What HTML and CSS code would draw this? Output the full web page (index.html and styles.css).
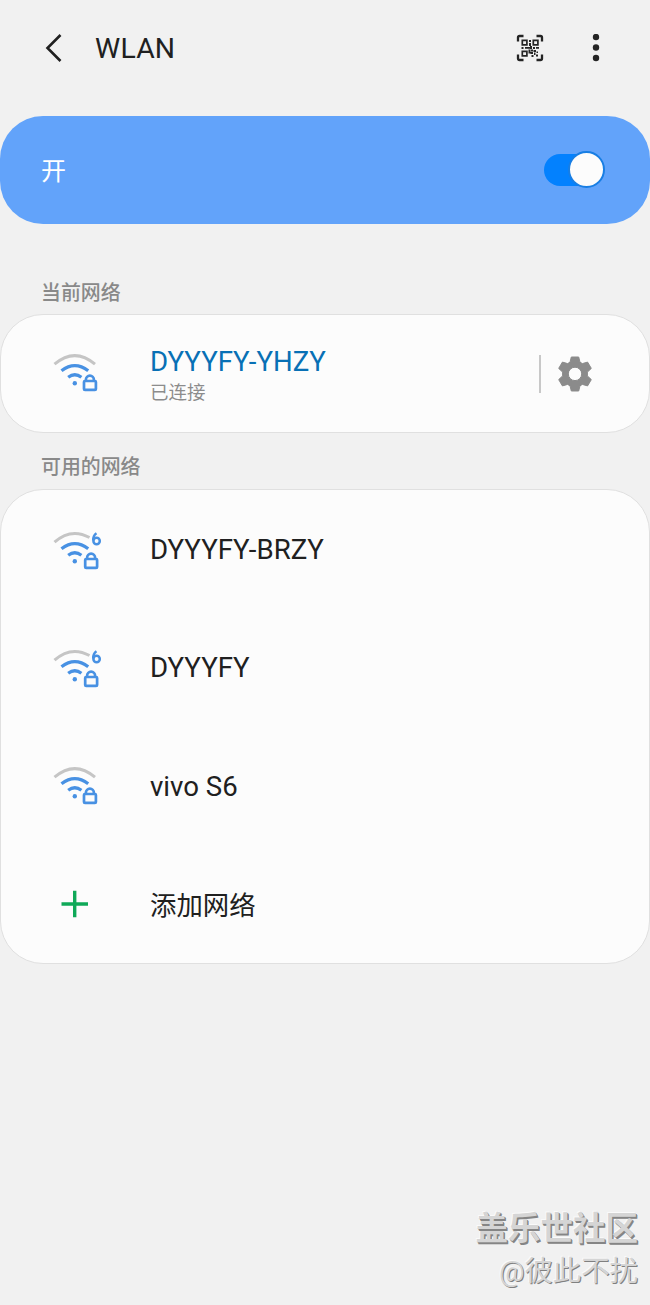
FILE: index.html
```html
<!DOCTYPE html>
<html lang="zh-CN">
<head>
<meta charset="utf-8">
<title>WLAN</title>
<link rel="stylesheet" href="styles.css">
</head>
<body>
<svg class="defs" aria-hidden="true">
  <defs>
    <g id="waves" fill="none" stroke="#4891e3" stroke-width="3.3">
      <path d="M11.500 20.700Q24.800 10.500 38.200 20.700"/>
      <path d="M18.200 27.200Q24.800 22.200 31.400 27.200"/>
      <circle cx="24.800" cy="33.300" r="2.200" fill="#4891e3" stroke="none"/>
    </g>
    <g id="lock" fill="none" stroke="#4891e3" stroke-width="2.700">
      <rect x="34" y="31" width="11.900" height="8.900" rx="1"/>
      <path d="M35.900 31V29.800a4 4.200 0 0 1 8 0V31"/>
    </g>
  </defs>
</svg>
<div class="screen">
  <header class="bar">
    <svg class="back" width="20" height="30" viewBox="0 0 20 30"><path d="M17.500 2L4.500 15L17.500 28"/></svg>
    <h1 class="title">WLAN</h1>
    <svg class="qr" width="28" height="28" viewBox="0 0 28 28">
      <path class="corner" d="M2 7.500V3.500Q2 2 3.500 2H7.500M20.500 2H24.500Q26 2 26 3.500V7.500M26 20.500V24.500Q26 26 24.500 26H20.500M7.500 26H3.500Q2 26 2 24.500V20.500"/>
      <path class="finder" d="M6.300 6.300h4.600v4.600h-4.600zM17.300 6.300h4.600v4.600h-4.600zM6.300 17.300h4.600v4.600h-4.600z"/>
      <path class="bits" d="M13 6h2v2h-2zM13 9h2v3h-2zM5.500 13h2v2h-2zM9 13h5v1.800h-5zM14 12h2v3h-2zM17 13h2v2h-2zM20 13h3v1.800h-3zM12.500 15.500h2v4h-2zM15 15.500h2v2h-2zM17.500 16h2.500v2h-2.500zM14.500 18h2.500v2h-2.500zM18 18.500h1.500v2.500h-1.500zM20.500 17.500h1.500v1.500h-1.500zM15.500 21h2v2h-2zM20 20.500h2v2h-2z"/>
    </svg>
    <svg class="more" width="8" height="28" viewBox="0 0 8 28"><circle cx="4" cy="3" r="3.200"/><circle cx="4" cy="13.500" r="3.200"/><circle cx="4" cy="24" r="3.200"/></svg>
  </header>

  <section class="power">
    <span class="power-label">开</span>
    <span class="switch"><span class="knob"></span></span>
  </section>

  <h2 class="heading current-heading">当前网络</h2>
  <section class="card current">
    <div class="row">
      <svg class="icon" width="60" height="50" viewBox="0 0 60 50"><path class="weak" d="M4.500 14.200Q24.800-3 45 14.200"/><use href="#waves"/><use href="#lock"/></svg>
      <div class="label"><span class="name connected">DYYYFY-YHZY</span><span class="status">已连接</span></div>
      <span class="divider"></span>
      <svg class="gear" width="36" height="36" viewBox="0 0 36 36"><path fill-rule="evenodd" stroke-width="1" stroke-linejoin="round" d="M14.300 1h7.400l1.300 5.200 2.400 1.400 5.200-1.500 3.700 6.300-3.900 3.700v3.800l3.900 3.700-3.700 6.300-5.200-1.500-2.400 1.400-1.300 5.200h-7.400l-1.300-5.200-2.400-1.400-5.200 1.500-3.700-6.300 3.900-3.700v-3.800l-3.900-3.700 3.700-6.300 5.200 1.500 2.400-1.400zM18 11.200a6.700 6.700 0 1 0 0 13.400a6.700 6.700 0 1 0 0-13.400z"/></svg>
    </div>
  </section>

  <h2 class="heading available-heading">可用的网络</h2>
  <section class="card">
    <div class="row">
      <svg class="icon wifi6" width="60" height="50" viewBox="0 0 60 50"><path class="weak" d="M4.500 14.200Q21-.5 39.500 9.500"/><use href="#waves"/><use href="#lock" x="1.200"/><path class="six" d="M46.500 5.200Q43 7.500 43.200 12.500"/><circle class="six" cx="46.600" cy="13" r="3.200"/></svg>
      <span class="name">DYYYFY-BRZY</span>
    </div>
    <div class="row">
      <svg class="icon wifi6" width="60" height="50" viewBox="0 0 60 50"><path class="weak" d="M4.500 14.200Q21-.5 39.500 9.500"/><use href="#waves"/><use href="#lock" x="1.200"/><path class="six" d="M46.500 5.200Q43 7.500 43.200 12.500"/><circle class="six" cx="46.600" cy="13" r="3.200"/></svg>
      <span class="name">DYYYFY</span>
    </div>
    <div class="row">
      <svg class="icon plain" width="60" height="50" viewBox="0 0 60 50"><path class="weak" d="M4.500 14.200Q24.800-3 45 14.200"/><use href="#waves"/><use href="#lock"/></svg>
      <span class="name">vivo S6</span>
    </div>
    <div class="row">
      <svg class="icon" width="60" height="50" viewBox="0 0 60 50"><path class="plus" d="M11.500 25H38M24.700 11.800V38.200"/></svg>
      <span class="name add">添加网络</span>
    </div>
  </section>

  <footer class="watermark">
    <span class="community">盖乐世社区</span>
    <span class="author">@彼此不扰</span>
  </footer>
</div>
</body>
</html>
```

FILE: styles.css
```css
* { box-sizing: border-box; }
body { margin: 0; background: #f1f1f1; color: #202020; font-family: Roboto, "Noto Sans CJK SC", sans-serif; }
.defs { display: block; width: 0; height: 0; }
.screen { width: 650px; height: 1305px; display: flex; flex-direction: column; overflow: hidden; }
svg { display: block; flex: none; }

.bar { height: 96px; display: flex; align-items: center; padding: 0 50px 0 43px; }
.back { fill: none; stroke: #202020; stroke-width: 2.6; }
.title { margin: 0 auto 0 32px; font-size: 28.4px; font-weight: 400; letter-spacing: .2px; }
.qr { margin-right: 48px; }
.corner { fill: none; stroke: #242424; stroke-width: 2.3; }
.finder { fill: none; stroke: #242424; stroke-width: 1.7; }
.bits, .more { fill: #242424; }

.power { height: 108px; margin-top: 19.5px; border-radius: 43px; background: #62a3fa; display: flex; align-items: center; justify-content: space-between; padding: 0 45px 0 41px; }
.power-label { color: #fff; font-size: 25px; line-height: 36px; padding-top: 5px; }
.switch { width: 61px; height: 32px; border-radius: 16px; background: linear-gradient(90deg, #0381fe 54px, transparent 54px); display: flex; align-items: center; justify-content: flex-end; }
.knob { width: 37px; height: 37px; flex: none; border: 2px solid #187ee4; border-radius: 50%; background: #fcfcfc; }

.heading { margin: 0; font-size: 19.9px; line-height: 30px; font-weight: 500; color: #898989; padding-left: 41px; }
.current-heading { padding-top: 55px; height: 90.5px; }
.available-heading { padding-top: 20px; height: 56px; }
.card { border: 1px solid #e0e0e0; border-radius: 43px; background: #fcfcfc; }
.row { height: 118.3px; display: flex; align-items: center; padding-left: 49px; }
.current .row { height: 117px; padding-right: 56px; }
.icon { margin-right: 40px; }
.current .icon { margin-top: 2px; }
.wifi6 { margin-top: 8px; }
.plain { margin-top: 4px; }
.weak { fill: none; stroke: #c5c5c5; stroke-width: 3; }
.six { fill: none; stroke: #4891e3; stroke-width: 2.5; }
.plus { fill: none; stroke: #0fa958; stroke-width: 3.4; }
.name { font-size: 27.6px; line-height: 32px; padding-top: 2px; }
.connected { color: #0870b5; }
.add { font-size: 26.4px; line-height: 38px; padding-top: 4px; }
.label { flex: 1; display: flex; flex-direction: column; padding-top: 4px; }
.status { font-size: 18.5px; line-height: 28px; padding-top: 1px; color: #8c8c8c; }
.divider { width: 2px; height: 38px; background: #c8c8c8; margin-right: 16px; }
.gear { fill: #8b8b8b; stroke: #8b8b8b; }

.watermark { margin-top: auto; padding: 0 12px 12px 0; display: flex; flex-direction: column; align-items: flex-end; color: #d5d5d5; }
.community { font-size: 32.5px; line-height: 44px; font-weight: 700; text-shadow: 1px 1px 0 #858585, 1.5px 1.5px 0 #858585, -1px -1px 0 #fafafa; }
.author { font-size: 28.4px; line-height: 42px; text-shadow: 1px 1px 0 #808080, -1px -1px 0 #fafafa; }
```
